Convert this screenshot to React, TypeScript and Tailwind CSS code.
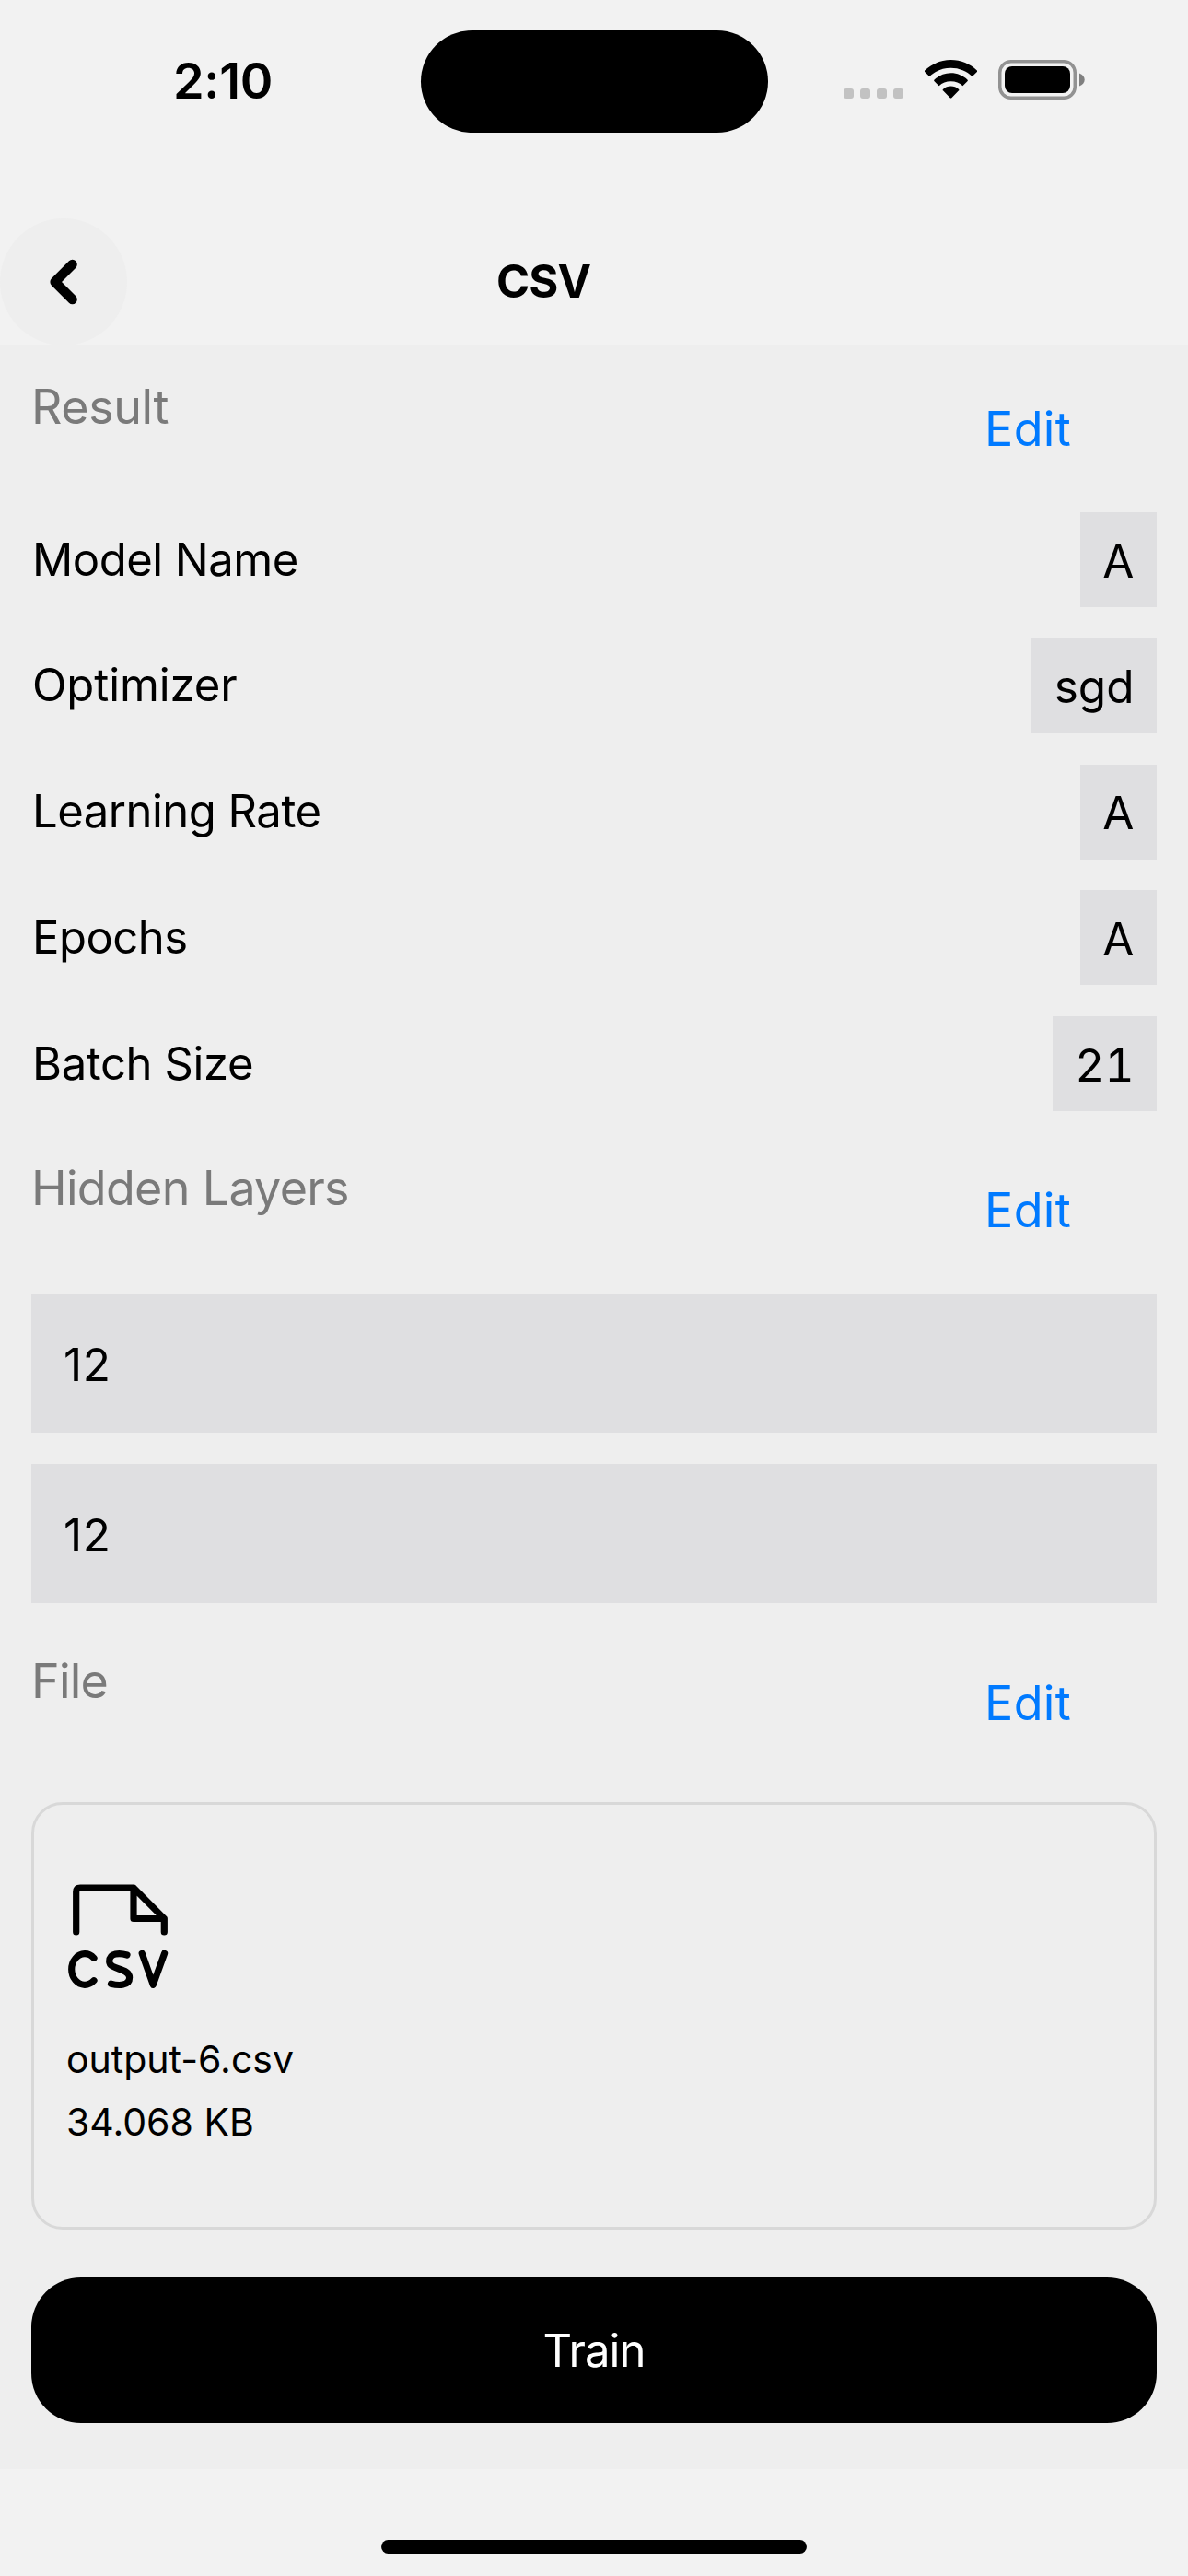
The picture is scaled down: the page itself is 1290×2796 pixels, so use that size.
import type { ReactNode } from "react";

const params = [
  { label: "Model Name", value: "A", tracking: "tracking-[-0.5px]" },
  { label: "Optimizer", value: "sgd", tracking: "tracking-[-0.1px]" },
  { label: "Learning Rate", value: "A", tracking: "tracking-[-0.5px]" },
  { label: "Epochs", value: "A", tracking: "tracking-[-0.5px]" },
  { label: "Batch Size", value: "21", tracking: "tracking-[-0.4px]" },
];

const layers = ["12", "12"];

function StatusBar() {
  return (
    <div className="relative flex h-[237px] items-start justify-between pl-[188px] pr-[112px] pt-[56px]">
      <div className="text-[54px] font-semibold leading-[64px] tracking-[-0.3px]">2:10</div>
      <div className="absolute left-[457px] top-[33px] h-[111px] w-[377px] rounded-full bg-black" />
      <div className="mt-[9px] flex h-[43px] items-start">
        <div className="mt-[31px] flex gap-[7px]">
          <span className="size-[11px] rounded-[3px] bg-[#c2c2c2]" />
          <span className="size-[11px] rounded-[3px] bg-[#c2c2c2]" />
          <span className="size-[11px] rounded-[3px] bg-[#c2c2c2]" />
          <span className="size-[11px] rounded-[3px] bg-[#c2c2c2]" />
        </div>
        <svg className="ml-[23px] h-[42px] w-[57px]" viewBox="0 0 57 42">
          <path d="M28.5 0C39.5 0 49.5 4.3 56.6 11.3a1.3 1.3 0 0 1 0 1.9L51.7 18.1C45.7 12.2 37.5 8.8 28.5 8.8S11.3 12.2 5.3 18.1L.4 13.2a1.3 1.3 0 0 1 0-1.9C7.5 4.3 17.5 0 28.5 0Z" />
          <path d="M28.5 14.3C35.4 14.3 41.7 17 46.4 21.4a1.3 1.3 0 0 1 0 1.9L41.4 28.2C38 25 33.5 23.2 28.5 23.2S19 25 15.6 28.2L10.6 23.3a1.3 1.3 0 0 1 0-1.9C15.3 17 21.6 14.3 28.5 14.3Z" />
          <path d="M28.5 28.6C31.7 28.6 34.6 29.8 36.8 31.7a1.2 1.2 0 0 1 0 1.9L29.3 41.2a1.1 1.1 0 0 1-1.6 0L20.2 33.6a1.2 1.2 0 0 1 0-1.9C22.4 29.8 25.3 28.6 28.5 28.6Z" />
        </svg>
        <svg className="ml-[23px] h-[43px] w-[94px]" viewBox="0 0 94 43">
          <rect x="1.75" y="1.75" width="81.5" height="39.5" rx="12" fill="none" stroke="#929292" strokeWidth="3.5" />
          <rect x="7" y="7" width="71" height="29" rx="8" />
          <path d="M88 14.5c3.5 1.300 5.700 4 5.700 7s-2.200 5.700-5.700 7Z" fill="#808080" />
        </svg>
      </div>
    </div>
  );
}

function SectionHeader({ title, className }: { title: string; className: string }) {
  return (
    <div className={`flex items-start justify-between pr-[93px] text-[52px] leading-[64px] ${className}`}>
      <h2 className="text-[#7a7a7a]">{title}</h2>
      <button className="mt-6 tracking-[0.3px] text-[#007aff]">Edit</button>
    </div>
  );
}

function Value({ children }: { children: ReactNode }) {
  return (
    <div className="flex h-[103px] items-center bg-[#dfdfe1] px-[24.5px] pt-0.5 text-[49.5px] tabular-nums">{children}</div>
  );
}

function CsvFileIcon() {
  return (
    <svg
      className="h-[130px] w-[125px]"
      viewBox="66 2035 125 130"
      fill="none"
      stroke="#000"
      strokeWidth="7.2"
      strokeLinecap="round"
      strokeLinejoin="round"
    >
      <path d="M82.700 2097V2053.500Q82.700 2049 87.200 2049H145L178.300 2082.500V2097M145 2049V2082.500H178.300" />
      <path d="M102 2125.300A14.400 16.800 0 1 0 102 2149.700" />
      <path d="M138 2122C130 2119.500 118.700 2119.500 118.700 2129C118.700 2138.500 140.600 2135.500 140.600 2146.500C140.600 2155.500 129 2155.500 120.500 2153.200" />
      <path d="M154.200 2120.300L166.300 2154.300L178.600 2120.300" />
    </svg>
  );
}

export default function App() {
  return (
    <div className="flex h-[2796px] w-[1290px] flex-col bg-[#f2f2f2] font-['Inter',sans-serif] text-black">
      <StatusBar />

      <header className="flex h-[138px] items-center">
        <button className="flex size-[138px] items-center justify-center rounded-full bg-[#eeeeee]" aria-label="Back">
          <svg
            className="size-[60px]"
            viewBox="0 0 60 60"
            fill="none"
            stroke="#000"
            strokeWidth="10.4"
            strokeLinecap="round"
            strokeLinejoin="round"
          >
            <path d="M39.600 11L20.600 30L39.600 49" />
          </svg>
        </button>
        <h1 className="ml-[401px] text-[49px] font-bold leading-[60px] tracking-[-0.9px]">CSV</h1>
      </header>

      <main className="flex h-[2305px] flex-col bg-[#eeeeee] px-[34px] pt-[35px] text-[49px] leading-[60px]">
        <SectionHeader title="Result" className="h-[146px] tracking-[-0.4px]" />
        <div className="flex flex-col gap-[33.75px]">
          {params.map((p) => (
            <div key={p.label} className="flex items-center justify-between">
              <span className={`pl-px ${p.tracking}`}>{p.label}</span>
              <Value>{p.value}</Value>
            </div>
          ))}
        </div>

        <SectionHeader title="Hidden Layers" className="mt-[52px] h-[146px] tracking-[-0.7px]" />
        <div className="flex flex-col gap-[34px]">
          {layers.map((units, i) => (
            <div key={i} className="flex h-[151px] items-center bg-[#dfdfe1] pl-[35px] pt-0.5 text-[49.5px] tracking-[0.5px]">
              {units}
            </div>
          ))}
        </div>

        <SectionHeader title="File" className="mt-[53px] h-[163px] tracking-[-0.8px]" />
        <div className="h-[464px] rounded-[34px] border-[3px] border-[#d8d8d8] pl-[29px] pt-[76px]">
          <CsvFileIcon />
          <p className="mt-[36px] pl-[6px] text-[41px] leading-[68px]">output-6.csv</p>
          <p className="pl-[6px] text-[41px] leading-[68px]">34.068 KB</p>
        </div>

        <button className="mt-[52px] h-[158px] rounded-[54px] bg-black pt-px tracking-[-0.9px] text-white">Train</button>
      </main>

      <div className="mx-auto mt-[77px] h-[15px] w-[462px] rounded-full bg-black" />
    </div>
  );
}
